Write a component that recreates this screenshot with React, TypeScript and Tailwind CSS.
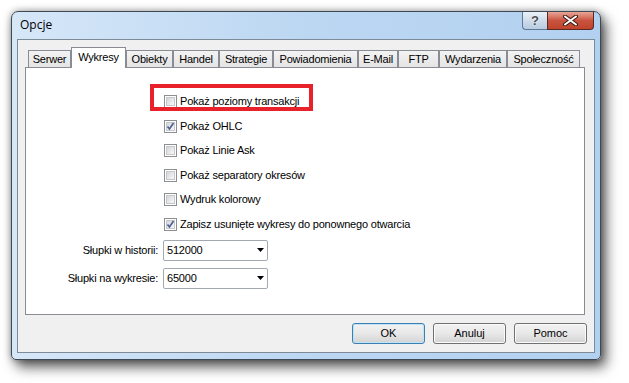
import React from "react";

const tabs = [
  { name: "Serwer", w: "w-[43px]" },
  { name: "Wykresy", w: "w-[55px]", active: true },
  { name: "Obiekty", w: "w-[47px]" },
  { name: "Handel", w: "w-[46px]" },
  { name: "Strategie", w: "w-[54px]" },
  { name: "Powiadomienia", w: "w-[85px]" },
  { name: "E-Mail", w: "w-[40px]" },
  { name: "FTP", w: "w-[41px]" },
  { name: "Wydarzenia", w: "w-[68px]" },
  { name: "Społeczność", w: "w-[73px]" },
];

const checks = [
  { label: "Pokaż poziomy transakcji", checked: false },
  { label: "Pokaż OHLC", checked: true },
  { label: "Pokaż Linie Ask", checked: false },
  { label: "Pokaż separatory okresów", checked: false },
  { label: "Wydruk kolorowy", checked: false },
  { label: "Zapisz usunięte wykresy do ponownego otwarcia", checked: true },
];

const combos = [
  { label: "Słupki w historii:", value: "512000" },
  { label: "Słupki na wykresie:", value: "65000" },
];

const CheckBox = ({ checked }: { checked: boolean }) => (
  <div className="w-[13px] h-[13px] border border-[#8e8f8f] bg-white p-[1px] shrink-0">
    <div className="relative w-full h-full border border-[#c6c8cb] bg-gradient-to-br from-[#d3d6da] to-[#f8f8f8]">
      {checked && (
        <svg width="11" height="11" viewBox="0 0 11 11" className="absolute -left-[2px] -top-[2px]">
          <path d="M2.5 5.5 L4.5 8 L8.5 2" stroke="#4a5d95" strokeWidth="1.6" fill="none" />
        </svg>
      )}
    </div>
  </div>
);

const Button = ({ label, def }: { label: string; def?: boolean }) => (
  <div
    className={
      "w-[73px] h-[21px] rounded-[3px] border flex items-center justify-center text-[11px] text-black bg-gradient-to-b from-[#f2f2f2] via-[#e8e8e8] to-[#d3d3d3] " +
      (def
        ? "border-[#3c7fb1] shadow-[inset_0_0_0_1px_#bfe3f7]"
        : "border-[#707070] shadow-[inset_0_0_0_1px_#fbfbfb]")
    }
  >
    {label}
  </div>
);

const App = () => {
  return (
    <div className="w-[629px] h-[383px] bg-white pt-[11px] pl-[11px] font-['Liberation_Sans',Arial,sans-serif]">
      <div className="w-[590px] h-[349px] rounded-t-[7px] rounded-b-[5px] border border-[#3f4953] bg-gradient-to-r from-[#d6e7f8] via-[#bcd7f2] to-[#b2d1f0] shadow-[5px_7px_13px_rgba(0,0,0,0.65),0_0_7px_rgba(0,0,0,0.35)] flex flex-col">
        {/* title bar */}
        <div className="h-[27px] flex justify-between items-start">
          <div className="pl-[8px] pt-[5px] leading-[16px] text-[12px] text-black font-['Open_Sans',sans-serif]">
            Opcje
          </div>
          <div className="flex mr-[6px]">
            <div className="w-[25px] h-[18px] rounded-bl-[4px] border border-t-0 border-r-0 border-[#5f7893] bg-gradient-to-b from-[#eaf1f9] via-[#cfdcea] to-[#b9cce2] flex items-center justify-center text-[13px] font-bold text-[#4d4d4d] [text-shadow:0_0_2px_#fff]">
              ?
            </div>
            <div className="w-[47px] h-[18px] rounded-br-[4px] border border-t-0 border-[#5a2a22] bg-gradient-to-b from-[#e7a697] via-[#c9533f] to-[#c0432c] flex items-center justify-center">
              <svg width="15" height="11" viewBox="0 0 15 11">
                <path d="M2 1.5 L13 9.5 M13 1.5 L2 9.5" stroke="#3b1c17" strokeWidth="4" strokeLinecap="round" />
                <path d="M2 1.5 L13 9.5 M13 1.5 L2 9.5" stroke="#ffffff" strokeWidth="2" strokeLinecap="round" />
              </svg>
            </div>
          </div>
        </div>

        {/* client area */}
        <div className="mx-[5px] h-[314px] border border-[#7d8a97] bg-[#f0f0f0] pt-[7px] flex flex-col">
          <div className="h-[21px] ml-[10px] flex items-end tracking-[-0.2px]">
            {tabs.map((t) =>
              t.active ? (
                <div
                  key={t.name}
                  className={t.w + " relative z-10 h-[21px] bg-white border border-b-0 border-[#898c95] flex items-center justify-center pb-[2px] text-[11px] text-black"}
                >
                  {t.name}
                </div>
              ) : (
                <div
                  key={t.name}
                  className={t.w + " h-[18px] border border-b-0 border-[#898c95] bg-gradient-to-b from-[#f3f3f3] to-[#e3e3e3] flex items-center justify-center text-[11px] text-black"}
                >
                  {t.name}
                </div>
              )
            )}
          </div>

          <div className="relative -mt-px ml-[7px] w-[560px] h-[248px] border border-[#898c95] bg-white pt-[27px] tracking-[-0.2px]">
            <div className="absolute left-[124px] top-[16px] w-[163px] h-[27px] border-4 border-[#e8212b]" />
            <div className="pl-[138px] flex flex-col gap-[11.6px]">
              {checks.map((c) => (
                <div key={c.label} className="h-[13px] flex items-center gap-[3px] text-[11px] text-black leading-none whitespace-nowrap">
                  <CheckBox checked={c.checked} />
                  <span>{c.label}</span>
                </div>
              ))}
            </div>
            <div className="mt-[9px] flex flex-col gap-[7px]">
              {combos.map((c) => (
                <div key={c.label} className="flex items-center gap-[5px]">
                  <div className="w-[132px] text-right text-[11px] text-black">{c.label}</div>
                  <div className="w-[105px] h-[21px] rounded-[2px] border border-[#a3a9b1] bg-white flex items-center justify-between pl-[3px] text-[11px] text-black">
                    <span>{c.value}</span>
                    <svg width="7" height="4" viewBox="0 0 7 4" className="mr-[3px]">
                      <path d="M0 0 H7 L3.5 4 Z" fill="#000" />
                    </svg>
                  </div>
                </div>
              ))}
            </div>
          </div>

          <div className="mt-[8px] pr-[7px] flex justify-end gap-[8px]">
            <Button label="OK" def />
            <Button label="Anuluj" />
            <Button label="Pomoc" />
          </div>
        </div>
      </div>
    </div>
  );
};

export default App;
